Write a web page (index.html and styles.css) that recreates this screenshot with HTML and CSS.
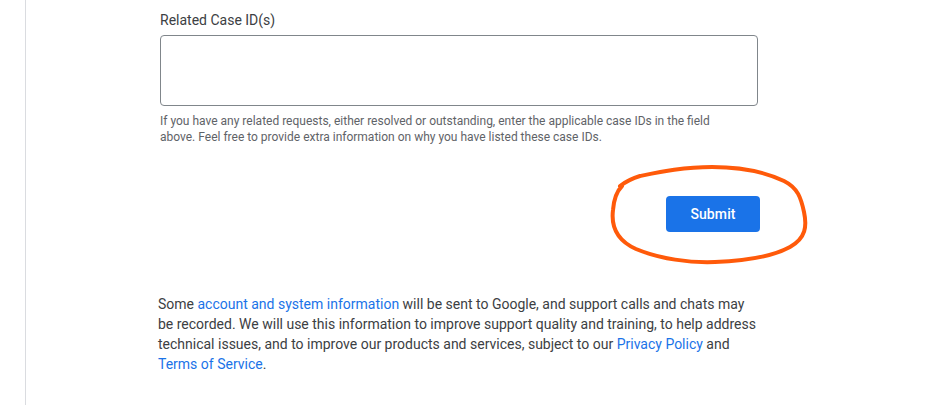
FILE: index.html
```html
<!DOCTYPE html>
<html lang="en">
<head>
<meta charset="utf-8">
<title>Related Case IDs</title>
<link rel="stylesheet" href="styles.css">
</head>
<body>
<div class="page">
  <div class="card">
    <div class="column">
      <label class="label" for="related">Related Case ID(s)</label>
      <textarea id="related" class="field"></textarea>
      <p class="help">If you have any related requests, either resolved or outstanding, enter the applicable case IDs in the field above. Feel free to provide extra information on why you have listed these case IDs.</p>
      <div class="actions">
        <button class="submit" type="button">Submit</button>
      </div>
      <p class="notice">Some <a href="#">account and system information</a> will be sent to Google, and support calls and chats may be recorded. We will use this information to improve support quality and training, to help address technical issues, and to improve our products and services, subject to our <a href="#">Privacy Policy</a> and <a href="#">Terms of Service</a>.</p>
    </div>
  </div>
  <svg class="annotation" width="947" height="405" viewBox="0 0 947 405" aria-hidden="true">
    <path d="M622 186 C 618 190, 614 198, 613 210 C 611 226, 616 240, 636 249 C 660 259, 690 263, 715 262 C 740 261, 770 258, 790 247 C 806 238, 807 226, 804 212 C 801 198, 798 188, 784 181 C 765 172, 740 167, 712 167 C 684 167, 660 172, 640 176 C 630 179, 624 183, 620 186"
      fill="none" stroke="#ff5a0a" stroke-width="4" stroke-linecap="round" stroke-linejoin="round"/>
  </svg>
</div>
</body>
</html>
```

FILE: styles.css
```css
html, body {
  margin: 0;
  padding: 0;
  background: #ffffff;
}

body {
  font-family: Roboto, "Liberation Sans", Arial, sans-serif;
  color: #3c4043;
}

.page {
  position: relative;
  width: 947px;
  height: 405px;
  overflow: hidden;
}

.card {
  margin-left: 25px;
  width: 830px;
  height: 405px;
  border-left: 1px solid #dadce0;
  border-right: 1px solid #dadce0;
  padding-left: 134px;
  box-sizing: content-box;
}

.column {
  width: 600px;
  padding-top: 10px;
  display: flex;
  flex-direction: column;
}

.label {
  display: block;
  font-size: 14px;
  line-height: 20px;
  color: #3c4043;
}

.field {
  display: block;
  margin: 5px 0 0 0;
  width: 598px;
  height: 71px;
  box-sizing: border-box;
  border: 1px solid #80868b;
  border-radius: 4px;
  resize: none;
  padding: 8px 12px;
  font-family: inherit;
  font-size: 14px;
  outline: none;
}

.help {
  margin: 7px 0 0 0;
  max-width: 560px;
  font-size: 12px;
  line-height: 16px;
  color: #5f6368;
}

.actions {
  display: flex;
  justify-content: flex-end;
  margin-top: 51px;
}

.submit {
  width: 94px;
  height: 36px;
  border: none;
  border-radius: 4px;
  background: #1a73e8;
  color: #ffffff;
  font-family: Roboto, "Liberation Sans", Arial, sans-serif;
  font-weight: 500;
  font-size: 14px;
  letter-spacing: 0.1px;
  padding: 0;
  cursor: pointer;
}

.notice {
  margin: 62px 0 0 -2px;
  width: 600px;
  font-size: 14px;
  line-height: 20px;
  color: #3c4043;
}

.notice a {
  color: #1a73e8;
  text-decoration: none;
}

.annotation {
  position: absolute;
  left: 0;
  top: 0;
  pointer-events: none;
}
```
